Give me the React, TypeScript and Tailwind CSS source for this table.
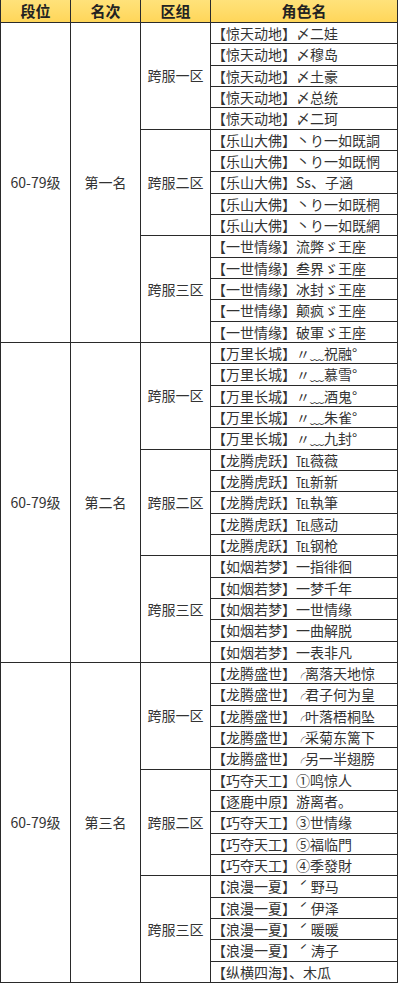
import React from "react";

type Zone = { zone: string; names: React.ReactNode[] };
type Rank = { level: string; rank: string; zones: Zone[] };

const Hook = () => (
  <span className="inline-block w-[9px] text-[10px] leading-none align-middle">╭</span>
);

const data: Rank[] = [
  {
    level: "60-79级",
    rank: "第一名",
    zones: [
      {
        zone: "跨服一区",
        names: [
          "【惊天动地】〆二娃",
          "【惊天动地】〆穆岛",
          "【惊天动地】〆土豪",
          "【惊天动地】〆总统",
          "【惊天动地】〆二珂",
        ],
      },
      {
        zone: "跨服二区",
        names: [
          "【乐山大佛】丶り一如既詷",
          "【乐山大佛】丶り一如既惘",
          "【乐山大佛】Ss、子涵",
          "【乐山大佛】丶り一如既棢",
          "【乐山大佛】丶り一如既網",
        ],
      },
      {
        zone: "跨服三区",
        names: [
          "【一世情缘】流弊ゞ王座",
          "【一世情缘】叁界ゞ王座",
          "【一世情缘】冰封ゞ王座",
          "【一世情缘】颠疯ゞ王座",
          "【一世情缘】破軍ゞ王座",
        ],
      },
    ],
  },
  {
    level: "60-79级",
    rank: "第二名",
    zones: [
      {
        zone: "跨服一区",
        names: [
          "【万里长城】〃﹏祝融°",
          "【万里长城】〃﹏慕雪°",
          "【万里长城】〃﹏酒鬼°",
          "【万里长城】〃﹏朱雀°",
          "【万里长城】〃﹏九封°",
        ],
      },
      {
        zone: "跨服二区",
        names: [
          "【龙腾虎跃】℡薇薇",
          "【龙腾虎跃】℡新新",
          "【龙腾虎跃】℡執筆",
          "【龙腾虎跃】℡感动",
          "【龙腾虎跃】℡钢枪",
        ],
      },
      {
        zone: "跨服三区",
        names: [
          "【如烟若梦】一指徘徊",
          "【如烟若梦】一梦千年",
          "【如烟若梦】一世情缘",
          "【如烟若梦】一曲解脱",
          "【如烟若梦】一表非凡",
        ],
      },
    ],
  },
  {
    level: "60-79级",
    rank: "第三名",
    zones: [
      {
        zone: "跨服一区",
        names: [
          <>【龙腾盛世】<Hook />离落天地惊</>,
          <>【龙腾盛世】<Hook />君子何为皇</>,
          <>【龙腾盛世】<Hook />叶落梧桐坠</>,
          <>【龙腾盛世】<Hook />采菊东篱下</>,
          <>【龙腾盛世】<Hook />另一半翅膀</>,
        ],
      },
      {
        zone: "跨服二区",
        names: [
          "【巧夺天工】①鸣惊人",
          "【逐鹿中原】游离者。",
          "【巧夺天工】③世情缘",
          "【巧夺天工】⑤福临門",
          "【巧夺天工】④季發財",
        ],
      },
      {
        zone: "跨服三区",
        names: [
          "【浪漫一夏】 ˊ 野马",
          "【浪漫一夏】 ˊ 伊泽",
          "【浪漫一夏】 ˊ 暖暖",
          "【浪漫一夏】 ˊ 涛子",
          "【纵横四海】、木瓜",
        ],
      },
    ],
  },
];

const font = {
  fontFamily:
    '"Noto Sans CJK SC", "Noto Sans", "Liberation Sans", sans-serif',
};

export default function App() {
  const cells: React.ReactNode[] = [];
  data.forEach((r, ri) => {
    cells.push(
      <div
        key={`l${ri}`}
        className="col-start-1 row-span-15 flex items-center justify-center border-r border-b border-[#2a2a2a] text-[14px] text-[#333]"
      >
        {r.level}
      </div>
    );
    cells.push(
      <div
        key={`r${ri}`}
        className="col-start-2 row-span-15 flex items-center justify-center border-r border-b border-[#2a2a2a] text-[14px] text-[#333]"
      >
        {r.rank}
      </div>
    );
    r.zones.forEach((z, zi) => {
      cells.push(
        <div
          key={`z${ri}-${zi}`}
          className="col-start-3 row-span-5 flex items-center justify-center border-r border-b border-[#2a2a2a] text-[14px] text-[#333]"
        >
          {z.zone}
        </div>
      );
      z.names.forEach((n, ni) => {
        cells.push(
          <div
            key={`n${ri}-${zi}-${ni}`}
            className="col-start-4 flex items-center border-r border-b border-[#2a2a2a] pl-[1px] text-[14px] leading-none text-[#333] whitespace-pre overflow-hidden"
          >
            {n}
          </div>
        );
      });
    });
  });

  return (
    <div className="w-[400px] h-[987px] bg-white" style={font}>
      <div className="grid w-[397px] h-[983px] grid-cols-[70px_70px_70px_187px] grid-rows-[23px_repeat(45,minmax(0,1fr))] border-l border-[#2a2a2a]">
        {["段位", "名次", "区组", "角色名"].map((h) => (
          <div
            key={h}
            className="flex items-center justify-center bg-gradient-to-b from-[#ffe27a] to-[#ffd659] border-r border-b border-[#2a2a2a] text-[15px] font-bold text-[#222]"
          >
            {h}
          </div>
        ))}
        {cells}
      </div>
    </div>
  );
}
